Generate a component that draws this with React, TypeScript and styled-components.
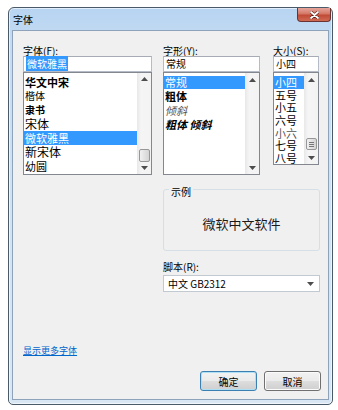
import React from "react";
import styled, { createGlobalStyle, css } from "styled-components";

const Global = createGlobalStyle`
  html, body { margin: 0; padding: 0; background: #ffffff; }
  body { font-family: "Noto Sans CJK SC", "Noto Sans", sans-serif; }
  * { box-sizing: border-box; }
`;

const Window = styled.div`
  margin: 7px 0 0 8px;
  width: 325px;
  height: 398px;
  border: 1px solid #4a5a68;
  border-radius: 6px 6px 5px 5px;
  background: linear-gradient(180deg, #b7d4f1 0%, #c3dbf3 8%, #cfe1f3 40%, #d9e7f5 100%);
  display: flex;
  flex-direction: column;
  padding: 0 3px 4px 3px;
  box-shadow: inset 0 0 0 1px rgba(255, 255, 255, 0.6);
`;

const TitleBar = styled.div`
  height: 22px;
  display: flex;
  align-items: flex-start;
`;

const Title = styled.div`
  font-size: 10px;
  line-height: 10px;
  color: #000;
  margin: 7px 0 0 1px;
`;

const CloseButton = styled.div`
  margin-left: auto;
  margin-right: -2px;
  width: 34px;
  height: 14px;
  border: 1px solid #6b3232;
  border-top: none;
  border-radius: 0 0 4px 4px;
  background: linear-gradient(180deg, #e6a69c 0%, #d47766 45%, #c04a36 55%, #d06a52 100%);
  display: flex;
  align-items: center;
  justify-content: center;
`;

const Client = styled.div`
  flex: 1;
  background: #f0f0f0;
  border: 1px solid #8ea3ba;
  padding: 14px 9px 0 10px;
  display: flex;
  flex-direction: column;
`;

const TopRow = styled.div`
  display: flex;
  gap: 11px;
`;

const Column = styled.div<{ $w: number; $ml?: number }>`
  width: ${(p) => p.$w}px;
  margin-left: ${(p) => p.$ml ?? 0}px;
  display: flex;
  flex-direction: column;
`;

const Label = styled.div`
  font-size: 10px;
  line-height: 11px;
  height: 11px;
  color: #000;
  white-space: nowrap;
`;

const Input = styled.div`
  height: 16px;
  background: #fff;
  border: 1px solid #b5bcc7;
  border-top-color: #a6abb5;
  font-size: 10px;
  line-height: 14px;
  padding-left: 2px;
  color: #000;
  white-space: nowrap;
`;

const SelText = styled.span`
  background: #3399ff;
  color: #fff;
  padding: 0 1px;
`;

const List = styled.div<{ $h: number }>`
  height: ${(p) => p.$h}px;
  background: #fff;
  border: 1px solid #828790;
  display: flex;
  overflow: hidden;
`;

const Items = styled.div<{ $pt?: number }>`
  flex: 1;
  padding-top: ${(p) => p.$pt ?? 2}px;
  min-width: 0;
`;

type ItemStyle = "normal" | "bold" | "italic" | "bolditalic";

const Item = styled.div<{ $sel?: boolean; $fs?: number; $v?: ItemStyle; $gray?: boolean; $h?: number }>`
  height: ${(p) => p.$h ?? 14}px;
  line-height: ${(p) => p.$h ?? 14}px;
  font-size: ${(p) => p.$fs ?? 11}px;
  padding-left: 1px;
  white-space: nowrap;
  color: ${(p) => (p.$gray ? "#555" : "#000")};
  ${(p) =>
    (p.$v === "bold" || p.$v === "bolditalic") &&
    css`
      font-weight: 700;
    `}
  ${(p) =>
    (p.$v === "italic" || p.$v === "bolditalic") &&
    css`
      font-style: italic;
    `}
  ${(p) =>
    p.$sel &&
    css`
      background: #3399ff;
      color: #fff;
    `}
`;

const ScrollBar = styled.div`
  width: 14px;
  flex-shrink: 0;
  background: linear-gradient(90deg, #e8e8e8 0%, #f5f5f5 30%, #f3f3f3 100%);
  display: flex;
  flex-direction: column;
  align-items: center;
`;

const Arrow = styled.div`
  height: 13px;
  width: 14px;
  display: flex;
  align-items: center;
  justify-content: center;
`;

const Track = styled.div`
  flex: 1;
  width: 100%;
  display: flex;
  flex-direction: column;
  align-items: center;
`;

const Thumb = styled.div<{ $top: number; $h: number }>`
  margin-top: ${(p) => p.$top}px;
  height: ${(p) => p.$h}px;
  width: 11px;
  border: 1px solid #979797;
  border-radius: 2px;
  background: linear-gradient(90deg, #f1f1f1 0%, #e2e2e2 50%, #d4d4d4 100%);
  display: flex;
  flex-direction: column;
  align-items: center;
  justify-content: center;
  gap: 1px;
`;

const Grip = styled.div`
  width: 5px;
  height: 1px;
  background: #777;
`;

const UpTri = () => (
  <svg width="7" height="4" viewBox="0 0 7 4">
    <path d="M0 4 L3.5 0 L7 4 Z" fill="#4d4d4d" />
  </svg>
);
const DownTri = () => (
  <svg width="7" height="4" viewBox="0 0 7 4">
    <path d="M0 0 L3.5 4 L7 0 Z" fill="#4d4d4d" />
  </svg>
);

const Scroll: React.FC<{ top: number; h: number; grip?: boolean }> = ({ top, h, grip }) => (
  <ScrollBar>
    <Arrow>
      <UpTri />
    </Arrow>
    <Track>
      <Thumb $top={top} $h={h}>
        {grip && (
          <>
            <Grip />
            <Grip />
            <Grip />
          </>
        )}
      </Thumb>
    </Track>
    <Arrow>
      <DownTri />
    </Arrow>
  </ScrollBar>
);

const LowerRow = styled.div`
  display: flex;
  margin-left: 140px;
  flex-direction: column;
  width: 157px;
`;

const Group = styled.div`
  position: relative;
  margin-top: 14px;
  height: 62px;
  border: 1px solid #d5dfe5;
  border-radius: 3px;
  display: flex;
  align-items: center;
  justify-content: center;
  padding-top: 7px;
`;

const Legend = styled.span`
  position: absolute;
  left: 5px;
  top: -3px;
  font-size: 10px;
  line-height: 10px;
  padding: 0 2px;
  background: #f0f0f0;
  color: #000;
`;

const SampleText = styled.div`
  font-size: 13px;
  line-height: 16px;
  color: #1a1a1a;
`;

const ScriptLabel = styled(Label)`
  margin-top: 10px;
`;

const Combo = styled.div`
  margin-top: 3px;
  height: 17px;
  background: #fff;
  border: 1px solid #c3c9d1;
  display: flex;
  align-items: center;
  padding: 0 5px 0 4px;
  font-size: 10px;
  color: #000;
`;

const ComboText = styled.span`
  flex: 1;
`;

const LinkText = styled.a`
  margin-top: 53px;
  font-size: 9px;
  line-height: 12px;
  color: #0066cc;
  text-decoration: underline;
  align-self: flex-start;
`;

const ButtonRow = styled.div`
  display: flex;
  justify-content: flex-end;
  gap: 7px;
  margin-top: 14px;
  margin-right: -2px;
`;

const Button = styled.div<{ $def?: boolean }>`
  width: 57px;
  height: 20px;
  border: 1px solid ${(p) => (p.$def ? "#3c7fb1" : "#707070")};
  border-radius: 3px;
  background: linear-gradient(180deg, #f2f2f2 0%, #ebebeb 48%, #dddddd 52%, #cfcfcf 100%);
  box-shadow: inset 0 0 0 1px ${(p) => (p.$def ? "#aee0f5" : "#fbfbfb")};
  font-size: 10px;
  display: flex;
  align-items: center;
  justify-content: center;
  color: #000;
`;

const sizes = ["小四", "五号", "小五", "六号", "小六", "七号", "八号"];

export default function App() {
  return (
    <>
      <Global />
      <Window>
        <TitleBar>
          <Title>字体</Title>
          <CloseButton>
            <svg width="9" height="8" viewBox="0 0 9 8">
              <path d="M1 1 L8 7 M8 1 L1 7" stroke="#5a1c14" strokeWidth="3" strokeLinecap="round" />
              <path d="M1 1 L8 7 M8 1 L1 7" stroke="#ffffff" strokeWidth="1.8" strokeLinecap="round" />
            </svg>
          </CloseButton>
        </TitleBar>
        <Client>
          <TopRow>
            <Column $w={129}>
              <Label>字体(F):</Label>
              <Input>
                <SelText>微软雅黑</SelText>
              </Input>
              <List $h={103}>
                <Items>
                  <Item $v="bold">华文中宋</Item>
                  <Item $fs={10}>楷体</Item>
                  <Item $fs={10} $v="bold">隶书</Item>
                  <Item $fs={12}>宋体</Item>
                  <Item $sel>微软雅黑</Item>
                  <Item $fs={12}>新宋体</Item>
                  <Item>幼圆</Item>
                </Items>
                <Scroll top={63} h={13} />
              </List>
            </Column>
            <Column $w={97}>
              <Label>字形(Y):</Label>
              <Input>常规</Input>
              <List $h={103}>
                <Items $pt={3}>
                  <Item $sel $h={13}>常规</Item>
                  <Item $v="bold" $h={14}>粗体</Item>
                  <Item $v="italic" $gray $h={14}>倾斜</Item>
                  <Item $v="bolditalic" $h={14}>粗体 倾斜</Item>
                </Items>
                <ScrollBar>
                  <Arrow>
                    <UpTri />
                  </Arrow>
                  <Track />
                  <Arrow>
                    <DownTri />
                  </Arrow>
                </ScrollBar>
              </List>
            </Column>
            <Column $w={46} $ml={2}>
              <Label>大小(S):</Label>
              <Input>小四</Input>
              <List $h={93}>
                <Items $pt={3}>
                  {sizes.map((s, i) => (
                    <Item key={s} $sel={i === 0} $gray={s === "小六"} $h={12.7}>
                      {s}
                    </Item>
                  ))}
                </Items>
                <Scroll top={52} h={12} grip />
              </List>
            </Column>
          </TopRow>
          <LowerRow>
            <Group>
              <Legend>示例</Legend>
              <SampleText>微软中文软件</SampleText>
            </Group>
            <ScriptLabel>脚本(R):</ScriptLabel>
            <Combo>
              <ComboText>中文 GB2312</ComboText>
              <DownTri />
            </Combo>
          </LowerRow>
          <LinkText>显示更多字体</LinkText>
          <ButtonRow>
            <Button $def>确定</Button>
            <Button>取消</Button>
          </ButtonRow>
        </Client>
      </Window>
    </>
  );
}
